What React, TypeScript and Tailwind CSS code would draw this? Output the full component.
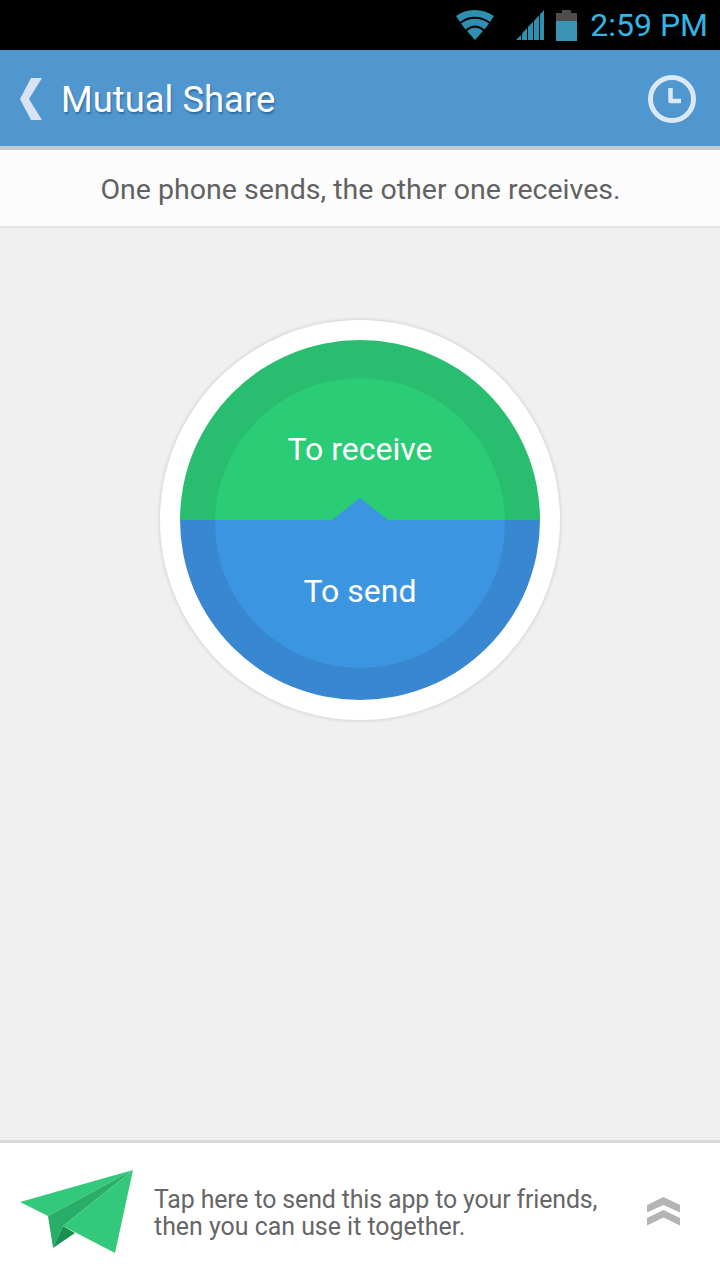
import React from 'react';

function WifiIcon() {
  return (
    <svg width="40" height="32" viewBox="0 0 40 32" fill="none">
      <path d="M1 7 C11 -1 28 -1 39 7 L35 13 C26 6 13 6 5 13 Z" fill="#2f8fb0" />
      <path d="M6 14.5 C14 8 26 8 34 14.5 L29.5 20.5 C23 15 17 15 10.5 20.5 Z" fill="#2f8fb0" />
      <path d="M12 22 C17 17.5 23 17.5 28 22 L20 31 Z" fill="#2f8fb0" />
    </svg>
  );
}

function SignalIcon() {
  return (
    <svg width="28" height="32" viewBox="0 0 28 32" fill="#2f8fb0">
      <path d="M0 31 L5 26 V31 Z" />
      <path d="M6 24.6 L11 19 V31 H6 Z" />
      <path d="M12 18 L17 12.8 V31 H12 Z" />
      <path d="M18 11.7 L23 6.4 V31 H18 Z" />
      <path d="M24 5.3 L28 1 V31 H24 Z" />
    </svg>
  );
}

function BatteryIcon() {
  return (
    <svg width="21" height="31" viewBox="0 0 21 31">
      <path d="M6 0 H15 V3 H21 V11 H0 V3 H6 Z" fill="#4d4d4d" />
      <rect x="0" y="11" width="21" height="20" fill="#3a93b5" />
    </svg>
  );
}

function ClockIcon() {
  return (
    <svg width="48" height="48" viewBox="0 0 48 48" fill="none">
      <circle cx="24" cy="24" r="21.5" stroke="#dce8f4" strokeWidth="5" />
      <path d="M22.5 13 V26 H33" stroke="#dce8f4" strokeWidth="4.5" strokeLinejoin="round" />
    </svg>
  );
}

function BackIcon() {
  return (
    <svg width="24" height="42" viewBox="0 0 24 42">
      <path d="M12 0 H23 L10 21 L23 42 H12 L1 21 Z" fill="#d8e3f1" />
    </svg>
  );
}

function PlaneIcon() {
  return (
    <svg width="114" height="84" viewBox="20 1170 114 84">
      <path d="M20 1202 L133 1170 L48 1216 Z" fill="#33c97b" />
      <path d="M48 1216 L133 1170 L63 1226 L53 1248 Z" fill="#28ae69" />
      <path d="M53 1248 L63 1226 L75 1233 Z" fill="#1a8f52" />
      <path d="M133 1170 L63 1226 L115 1253 Z" fill="#33c97b" />
    </svg>
  );
}

function ChevronsIcon() {
  return (
    <svg width="33" height="29" viewBox="0 0 33 29" fill="#b4b4b4">
      <path d="M0 8 L16.5 0 L33 8 V15.5 L16.5 8 L0 15.5 Z" />
      <path d="M0 21 L16.5 13 L33 21 V28.5 L16.5 20.5 L0 28.5 Z" />
    </svg>
  );
}

export default function App() {
  return (
    <div className="w-[720px] h-[1280px] flex flex-col bg-[#f0f0f0] overflow-hidden font-['Roboto',sans-serif]">
      {/* Status bar */}
      <div className="h-[50px] bg-black flex items-center justify-end pr-[12px]">
        <div className="mr-[21px]"><WifiIcon /></div>
        <div className="mr-[12px]"><SignalIcon /></div>
        <div className="mr-[13px]"><BatteryIcon /></div>
        <span className="text-[32px] leading-none text-[#33b5e5]">2:59 PM</span>
      </div>

      {/* Header */}
      <div className="h-[100px] pt-[2px] bg-[#5097d0] border-b-[4px] border-[#c4ccd2] flex items-center pl-[19px] pr-[24px]">
        <BackIcon />
        <span className="ml-[18px] mt-[3px] text-[36.4px] text-white [text-shadow:1px_2px_2px_rgba(0,50,100,0.45)]">Mutual Share</span>
        <div className="ml-auto"><ClockIcon /></div>
      </div>

      {/* Hint */}
      <div className="h-[78px] pt-[4px] pl-[1px] bg-[#fcfcfc] border-b-2 border-[#e2e2e2] flex items-center justify-center text-[28.55px] text-[#626262]">
        One phone sends, the other one receives.
      </div>

      {/* Circle */}
      <div className="flex-1 flex justify-center pt-[92px]">
        <div className="w-[400px] h-[400px] rounded-full bg-white p-[20px] shadow-[0_0_4px_rgba(0,0,0,0.18)]">
          <div className="relative w-[360px] h-[360px] rounded-full overflow-hidden flex flex-col">
            <div className="h-[180px] overflow-hidden bg-[#29bd6f] flex justify-center">
              <div className="w-[290px] h-[290px] shrink-0 mt-[38px] rounded-full bg-[#2acc75] flex justify-center pt-[47px]">
                <span className="text-[32px] leading-[48px] h-[48px] text-white">To receive</span>
              </div>
            </div>
            <div className="h-[180px] overflow-hidden bg-[#3887d0] flex justify-center">
              <div className="w-[290px] h-[290px] shrink-0 mt-[-142px] rounded-full bg-[#3b95e0] flex justify-center pt-[189px]">
                <span className="text-[32px] leading-[48px] h-[48px] text-white">To send</span>
              </div>
            </div>
            <svg className="absolute left-[152px] top-[158px]" width="56" height="22" viewBox="0 0 56 22">
              <path d="M0 22 L28 0 L56 22 Z" fill="#3b95e0" />
            </svg>
          </div>
        </div>
      </div>

      {/* Footer */}
      <div className="h-[140px] bg-white border-t-[3px] border-[#d8d8d8] flex items-center pl-[20px] pr-[40px]">
        <div className="mt-[1px]"><PlaneIcon /></div>
        <div className="ml-[20px] mt-[3px] text-[24.9px] leading-[27px] text-[#666666]">
          <div className="tracking-[-0.13px]">Tap here to send this app to your friends,</div>
          <div>then you can use it together.</div>
        </div>
        <div className="ml-auto"><ChevronsIcon /></div>
      </div>
    </div>
  );
}
